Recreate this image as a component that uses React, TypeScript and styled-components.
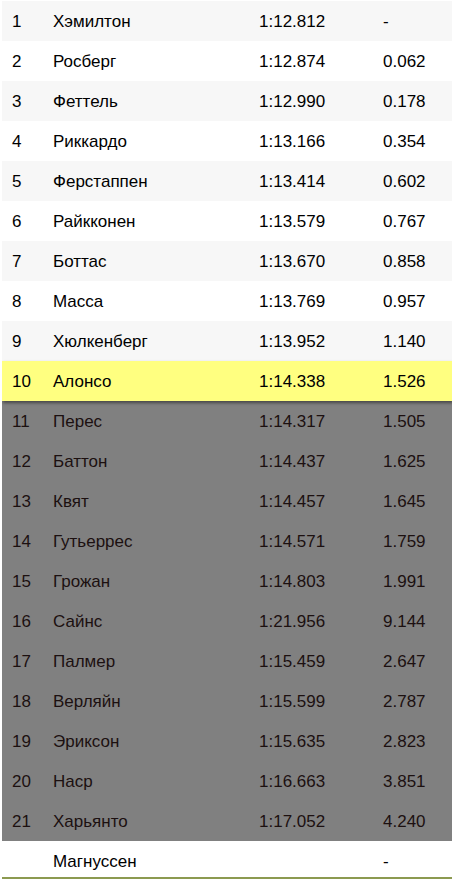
import React, { FC } from "react";
import styled, { createGlobalStyle, css } from "styled-components";

const GlobalStyle = createGlobalStyle`
  html, body {
    margin: 0;
    padding: 0;
    background: #ffffff;
  }
  body {
    font-family: "Liberation Sans", Arial, sans-serif;
  }
`;

type RowKind = "odd" | "even" | "highlight" | "out" | "plain";

type Result = {
  pos: string;
  name: string;
  time: string;
  gap: string;
};

const results: Result[] = [
  { pos: "1", name: "Хэмилтон", time: "1:12.812", gap: "-" },
  { pos: "2", name: "Росберг", time: "1:12.874", gap: "0.062" },
  { pos: "3", name: "Феттель", time: "1:12.990", gap: "0.178" },
  { pos: "4", name: "Риккардо", time: "1:13.166", gap: "0.354" },
  { pos: "5", name: "Ферстаппен", time: "1:13.414", gap: "0.602" },
  { pos: "6", name: "Райкконен", time: "1:13.579", gap: "0.767" },
  { pos: "7", name: "Боттас", time: "1:13.670", gap: "0.858" },
  { pos: "8", name: "Масса", time: "1:13.769", gap: "0.957" },
  { pos: "9", name: "Хюлкенберг", time: "1:13.952", gap: "1.140" },
  { pos: "10", name: "Алонсо", time: "1:14.338", gap: "1.526" },
  { pos: "11", name: "Перес", time: "1:14.317", gap: "1.505" },
  { pos: "12", name: "Баттон", time: "1:14.437", gap: "1.625" },
  { pos: "13", name: "Квят", time: "1:14.457", gap: "1.645" },
  { pos: "14", name: "Гутьеррес", time: "1:14.571", gap: "1.759" },
  { pos: "15", name: "Грожан", time: "1:14.803", gap: "1.991" },
  { pos: "16", name: "Сайнс", time: "1:21.956", gap: "9.144" },
  { pos: "17", name: "Палмер", time: "1:15.459", gap: "2.647" },
  { pos: "18", name: "Верляйн", time: "1:15.599", gap: "2.787" },
  { pos: "19", name: "Эриксон", time: "1:15.635", gap: "2.823" },
  { pos: "20", name: "Наср", time: "1:16.663", gap: "3.851" },
  { pos: "21", name: "Харьянто", time: "1:17.052", gap: "4.240" },
  { pos: "", name: "Магнуссен", time: "", gap: "-" },
];

const Table = styled.div`
  margin: 1px 0 0 2px;
  width: 450px;
  height: 876px;
  overflow: hidden;
  border-bottom: 2px solid #8c9a50;
`;

const kindStyles: Record<RowKind, ReturnType<typeof css>> = {
  odd: css`
    background: #f7f7f7;
    color: #000;
  `,
  even: css`
    background: #ffffff;
    color: #000;
  `,
  highlight: css`
    background: #ffff80;
    color: #000;
    position: relative;
    z-index: 1;
    box-shadow: 1px 2px 3px rgba(0, 0, 0, 0.45);
  `,
  out: css`
    background: #808080;
    color: #1c1010;
  `,
  plain: css`
    background: #ffffff;
    color: #000;
  `,
};

const Row = styled.div<{ $kind: RowKind }>`
  display: grid;
  grid-template-columns: 41px 206px 124px 1fr;
  height: 40px;
  align-items: center;
  font-size: 17px;
  line-height: 20px;
  padding-top: 1px;
  box-sizing: border-box;
  ${(p) => kindStyles[p.$kind]}
`;

const Cell = styled.div`
  padding-left: 10px;
  white-space: nowrap;
`;

const rowKind = (i: number, r: Result): RowKind => {
  if (r.pos === "") return "plain";
  const n = Number(r.pos);
  if (n === 10) return "highlight";
  if (n > 10) return "out";
  return i % 2 === 0 ? "odd" : "even";
};

const App: FC = () => (
  <>
    <GlobalStyle />
    <Table>
      {results.map((r, i) => (
        <Row key={r.name} $kind={rowKind(i, r)}>
          <Cell>{r.pos}</Cell>
          <Cell>{r.name}</Cell>
          <Cell>{r.time}</Cell>
          <Cell>{r.gap}</Cell>
        </Row>
      ))}
    </Table>
  </>
);

export default App;
